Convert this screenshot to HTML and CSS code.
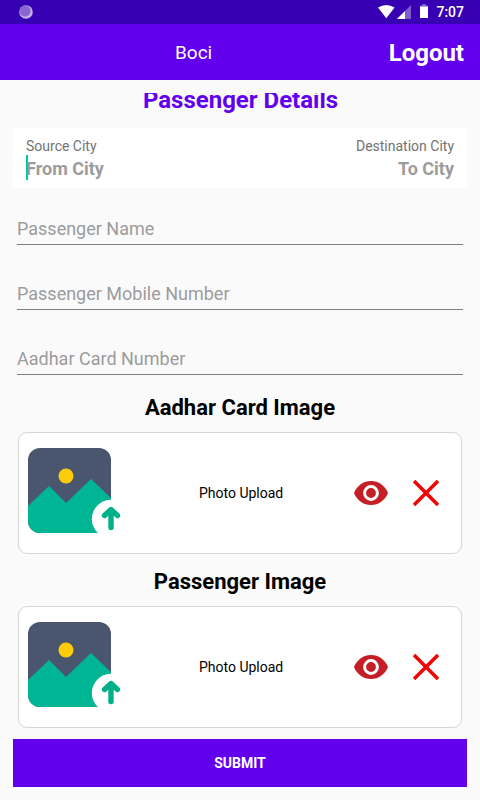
FILE: index.html
```html
<!DOCTYPE html>
<html lang="en">
<head>
    <meta charset="utf-8" />
    <title>Passenger Details</title>
    <link rel="stylesheet" href="styles.css">
</head>
<body>
    <!-- status bar -->
    <div class="status_bar">
      <svg class="sync" width="16" height="16" viewBox="0 0 16 16">
        <circle cx="8" cy="8" r="6.8" fill="#c4b0e8"/>
        <circle cx="7" cy="7" r="5.6" fill="#8a66cf"/>
      </svg>
      <svg class="signals" width="54" height="16" viewBox="0 0 54 16">
        <path d="M0 3.6Q8.3 -1.8 16.6 3.6L8.3 14.2Z" fill="#fff"/>
        <path d="M19 15L33 1V15Z" fill="#7f5bcb"/>
        <path d="M19 15L27 7V15Z" fill="#fff"/>
        <path d="M44 0H48V1.5H50V5H42V1.5H44Z" fill="#7f5bcb"/>
        <path d="M42 2.5H50V14H42Z" fill="#fff"/>
      </svg>
      <span class="time">7:07</span>
    </div>

    <!-- toolbar -->
    <div class="toolbar">
      <span class="brand">Boci</span>
      <span class="logout">Logout</span>
    </div>

    <div class="content">
      <h1 class="title">Passenger Details</h1>

      <div class="cities">
        <div class="city">
          <label>Source City</label>
          <div class="city_input focus">From City</div>
        </div>
        <div class="city to">
          <label>Destination City</label>
          <div class="city_input">To City</div>
        </div>
      </div>

      <div class="field">Passenger Name</div>
      <div class="field">Passenger Mobile Number</div>
      <div class="field">Aadhar Card Number</div>

      <h2 class="heading">Aadhar Card Image</h2>
      <div class="card">
        <svg class="photo" width="104" height="92" viewBox="0 0 104 92">
          <rect x="0" y="0" width="83" height="85" rx="12" fill="#4a566e"/>
          <path d="M0 58L21 38L38 55L63 31L83 50V73A12 12 0 0 1 71 85H12A12 12 0 0 1 0 73Z" fill="#00b594"/>
          <circle cx="38" cy="28" r="7.5" fill="#ffcc0a"/>
          <circle cx="83" cy="71" r="19.2" fill="#fff"/>
          <path d="M83 79.5V62M76.5 67.5L83 61.5L89.5 67.5" fill="none" stroke="#00b087" stroke-width="5.4" stroke-linecap="round" stroke-linejoin="round"/>
        </svg>
        <span class="upload">Photo Upload</span>
        <svg class="eye" width="34" height="24" viewBox="0 0 34 24">
          <path d="M0 12C3 4.5 9.5 0 17 0S31 4.5 34 12C31 19.5 24.5 24 17 24S3 19.5 0 12Z" fill="#c41e26"/>
          <circle cx="17" cy="12" r="6.4" fill="#c41e26" stroke="#fff" stroke-width="3"/>
        </svg>
        <svg class="remove" width="26" height="26" viewBox="0 0 26 26">
          <path d="M1 1L25 25M25 1L1 25" stroke="#f00505" stroke-width="3.6"/>
        </svg>
      </div>

      <h2 class="heading">Passenger Image</h2>
      <div class="card">
        <svg class="photo" width="104" height="92" viewBox="0 0 104 92">
          <rect x="0" y="0" width="83" height="85" rx="12" fill="#4a566e"/>
          <path d="M0 58L21 38L38 55L63 31L83 50V73A12 12 0 0 1 71 85H12A12 12 0 0 1 0 73Z" fill="#00b594"/>
          <circle cx="38" cy="28" r="7.5" fill="#ffcc0a"/>
          <circle cx="83" cy="71" r="19.2" fill="#fff"/>
          <path d="M83 79.5V62M76.5 67.5L83 61.5L89.5 67.5" fill="none" stroke="#00b087" stroke-width="5.4" stroke-linecap="round" stroke-linejoin="round"/>
        </svg>
        <span class="upload">Photo Upload</span>
        <svg class="eye" width="34" height="24" viewBox="0 0 34 24">
          <path d="M0 12C3 4.5 9.5 0 17 0S31 4.5 34 12C31 19.5 24.5 24 17 24S3 19.5 0 12Z" fill="#c41e26"/>
          <circle cx="17" cy="12" r="6.4" fill="#c41e26" stroke="#fff" stroke-width="3"/>
        </svg>
        <svg class="remove" width="26" height="26" viewBox="0 0 26 26">
          <path d="M1 1L25 25M25 1L1 25" stroke="#f00505" stroke-width="3.6"/>
        </svg>
      </div>

      <button class="submit">SUBMIT</button>
    </div>
</body>
</html>
```

FILE: styles.css
```css
* {
  margin: 0;
  padding: 0;
  box-sizing: border-box;
}
body {
  height: 800px;
  overflow: hidden;
  background-color: #fafafa;
  font-family: Roboto, "Liberation Sans", sans-serif;
}
.status_bar {
  display: flex;
  align-items: center;
  height: 24px;
  padding: 0 16px 0 18px;
  background-color: #3700b3;
  color: #fff;
}
.signals {
  margin-left: auto;
  margin-right: 4px;
}
.time {
  font-size: 14px;
  font-weight: 500;
}
/* toolbar */
.toolbar {
  display: flex;
  align-items: center;
  justify-content: space-between;
  height: 56px;
  padding: 2px 16px 0 175px;
  background-color: #6200ee;
  color: #fff;
}
.brand {
  margin-bottom: 2px;
  font-size: 19px;
}
.logout {
  font-size: 24px;
  font-weight: bold;
}
/* the title is scrolled partly out of view */
.content {
  height: 707px;
  margin: 13px 13px 0;
  overflow: hidden;
}
.title {
  height: 28px;
  margin-top: -7px;
  padding-left: 1px;
  color: #6200ee;
  font-size: 24px;
  line-height: 28px;
  text-align: center;
}
.cities {
  display: flex;
  justify-content: space-between;
  height: 60px;
  margin-top: 14px;
  padding: 10px 13px 0;
  background-color: #fff;
}
.city label {
  display: block;
  color: #737373;
  font-size: 14px;
  line-height: 17px;
}
.city_input {
  height: 25px;
  color: #9c9c9c;
  font-size: 18px;
  font-weight: bold;
  line-height: 28px;
}
.to {
  text-align: right;
}
/* text cursor */
.focus {
  box-shadow: inset 2px 0 #00c9a7;
}
.field {
  height: 45px;
  margin: 12px 4px 20px;
  border-bottom: 1px solid #808080;
  color: #9c9c9c;
  font-size: 18px;
  line-height: 58px;
}
.heading {
  height: 26px;
  font-size: 22px;
  line-height: 26px;
  text-align: center;
}
.card {
  display: flex;
  align-items: center;
  height: 122px;
  margin: 11px 5px 15px;
  padding: 0 22px 0 9px;
  background-color: #fff;
  border: 1px solid #d6d6d6;
  border-radius: 9px;
}
.photo {
  margin-top: 2px;
}
.upload {
  flex: 1;
  padding-left: 67px;
  font-size: 14px;
}
.eye {
  margin-right: 25px;
}
.submit {
  display: block;
  width: 100%;
  height: 48px;
  margin-top: -4px;
  border: none;
  background-color: #6200ee;
  color: #fff;
  font-family: inherit;
  font-size: 14px;
  font-weight: bold;
}
```
